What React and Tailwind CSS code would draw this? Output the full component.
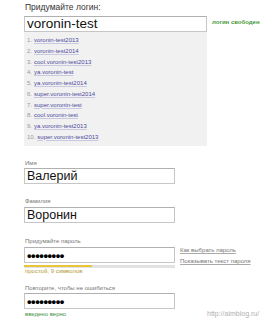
import React from 'react';

const suggestions = [
    'voronin-test2013',
    'voronin-test2014',
    'cool.voronin-test2013',
    'ya.voronin-test',
    'ya.voronin-test2014',
    'super.voronin-test2014',
    'super.voronin-test',
    'cool.voronin-test',
    'ya.voronin-test2013',
    'super.voronin-test2013',
];

const Field = ({ children, className = '' }) => (
    <div className={`h-[16px] w-[151px] border border-[#c6c6c6] border-t-[#b0b0b0] bg-white flex items-center pl-[2px] ${className}`}>
        {children}
    </div>
);

const Label = ({ children, className = '' }) => (
    <div className={`text-[6px] leading-[8px] text-[#777] ${className}`}>{children}</div>
);

const Dots = () => (
    <span className="text-[13px] leading-none font-bold text-black tracking-[-0.45px]">•••••••••</span>
);

const App = () => {
    return (
        <div className="relative w-[265px] h-[320px] bg-white overflow-hidden pl-[24px] pt-[2px] font-['Liberation_Sans',Arial,sans-serif]">
            <div className="text-[8.5px] leading-[10px] text-[#333] mb-[4px] pl-[1px]">Придумайте логин:</div>

            {/* login row */}
            <div className="flex items-start">
                <div className="h-[16px] w-[183px] border border-[#c6c6c6] border-t-[#b0b0b0] bg-white flex items-center pl-[2px]">
                    <span className="text-[13.5px] leading-none text-[#111]">voronin-test</span>
                </div>
                <div className="ml-[5px] mt-[2px] text-[6px] leading-[8px] font-bold text-[#4a9a3a]">логин свободен</div>
            </div>

            {/* suggestions */}
            <div className="w-[183px] bg-[#f1f1f1] pt-[3.3px] pb-[4px] pl-[3px]">
                {suggestions.map((s, i) => (
                    <div key={s} className="text-[6px] leading-[10.7px] flex">
                        <span className="text-[#999] mr-[2px]">{i + 1}.</span>
                        <span className="text-[#4b4b9c] underline decoration-[#c8c8e0]">{s}</span>
                    </div>
                ))}
            </div>

            <Label className="mt-[13px] pl-[1px]">Имя</Label>
            <Field className="mt-[1px]">
                <span className="text-[12.5px] leading-none text-[#111]">Валерий</span>
            </Field>

            <Label className="mt-[13px] pl-[1px]">Фамилия</Label>
            <Field className="mt-[2px]">
                <span className="text-[12.5px] leading-none text-[#111]">Воронин</span>
            </Field>

            <Label className="mt-[14px] pl-[1px]">Придумайте пароль</Label>
            <div className="flex items-start mt-[2px]">
                <div>
                    <Field>
                        <Dots />
                    </Field>
                    <div className="mt-[2px] h-[3px] w-[151px] bg-[#e2e2e2]">
                        <div className="w-[68px] h-[1.5px] bg-[#e8c53a]"></div>
                    </div>
                    <div className="text-[6px] leading-[6px] text-[#b49a35] pl-[1px]">простой, 9 символов</div>
                </div>
                <div className="ml-[5px] -mt-[0.5px] flex flex-col gap-[4.4px] text-[6px] leading-[7px] text-[#777]">
                    <span className="underline decoration-[#aaa]">Как выбрать пароль</span>
                    <span className="underline decoration-[#aaa]">Показывать текст пароля</span>
                </div>
            </div>

            <Label className="mt-[10px] pl-[1px]">Повторите, чтобы не ошибиться</Label>
            <Field className="mt-[1px]">
                <Dots />
            </Field>
            <div className="mt-[1px] text-[6px] leading-[8px] text-[#3f8f3f] pl-[1px]">введено верно</div>

            <div className="absolute left-[207px] top-[310px] text-[7px] leading-[8px] text-[#b0b0b0]">http://aimblog.ru/</div>
        </div>
    );
};

export default App;
